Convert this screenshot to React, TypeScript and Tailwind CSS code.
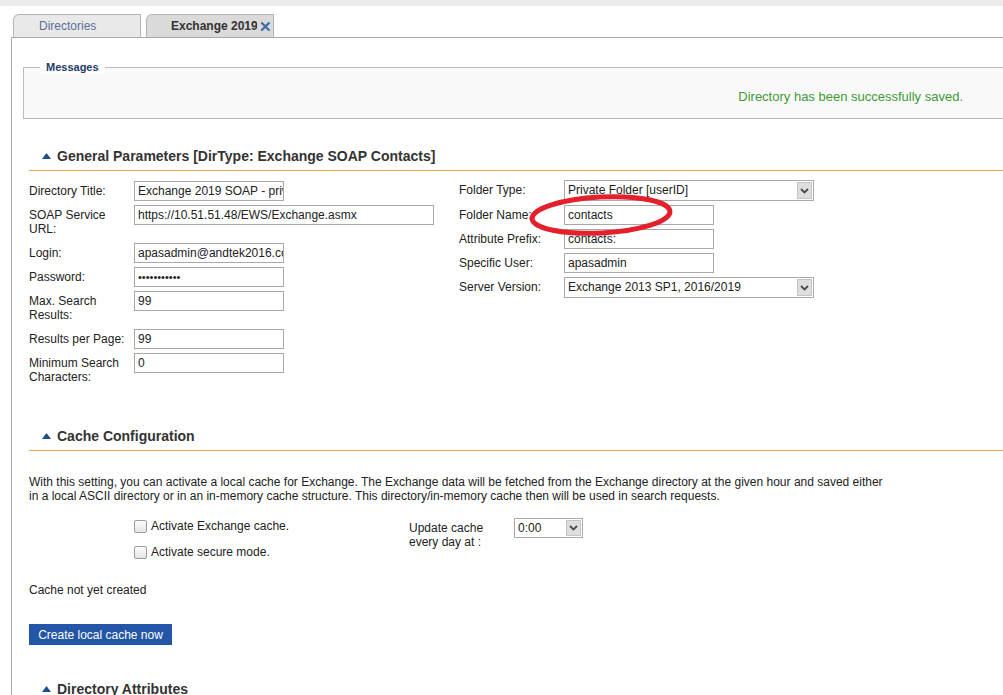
import React from "react";

const font = "font-['Liberation_Sans',Arial,sans-serif]";

const Triangle = () => (
  <svg width="9" height="6" viewBox="0 0 9 6" className="shrink-0">
    <polygon points="0,6 4.5,0 9,6" fill="#1d4f8c" />
  </svg>
);

const SectionHeading = ({ title, className = "" }: { title: string; className?: string }) => (
  <div className={`ml-[17px] flex items-center gap-[6px] border-b border-[#e6a64a] pb-[5px] pl-[13px] ${className}`}>
    <Triangle />
    <span className="text-[14px] font-bold leading-[18px] text-[#333]">{title}</span>
  </div>
);

const Label = ({ children }: { children: React.ReactNode }) => (
  <div className="py-[3px] pr-[4px] text-[12px] leading-[14px] text-[#222]">{children}</div>
);

const TextInput = ({ value, w = "w-[150px]" }: { value: string; w?: string }) => (
  <div className={`${w} h-[20px] overflow-hidden whitespace-nowrap border border-[#a9a9a9] bg-white px-[3px] text-[12px] leading-[18px] text-[#222]`}>
    {value}
  </div>
);

const Chevron = () => (
  <svg width="9" height="6" viewBox="0 0 9 6">
    <path d="M1 1 L4.5 4.5 L8 1" stroke="#4a4a4a" strokeWidth="1.8" fill="none" />
  </svg>
);

const Select = ({ value, w, h = "h-[21px]" }: { value: string; w: string; h?: string }) => (
  <div className={`${w} ${h} flex border border-[#a9a9a9] bg-white`}>
    <div className="flex-1 overflow-hidden whitespace-nowrap px-[3px] text-[12px] leading-[18px] text-[#222]">{value}</div>
    <div className="m-px flex w-[15px] items-center justify-center border border-[#c4c4c4] bg-[#dedede]">
      <Chevron />
    </div>
  </div>
);

const Checkbox = ({ label }: { label: string }) => (
  <div className="flex h-[20px] items-center gap-[4px]">
    <span className="h-[13px] w-[13px] rounded-[2px] border border-[#9c9c9c] bg-gradient-to-b from-[#fdfdfd] to-[#e4e4e4]" />
    <span className="text-[12px] leading-[14px] text-[#222]">{label}</span>
  </div>
);

export default function App() {
  return (
    <div className={`relative h-[695px] w-[1003px] overflow-hidden bg-white ${font}`}>
      <div className="h-[6px] bg-[#ececec]" />

      {/* tabs */}
      <div className="mt-[8px] flex gap-[5px] pl-[13px]">
        <div className="flex h-[23px] w-[128px] items-center rounded-tl-[6px] border border-b-0 border-[#b4b4b4] bg-[#e9e9e9] pl-[25px] text-[12px] text-[#5a6f94]">
          Directories
        </div>
        <div className="flex h-[23px] w-[128px] items-center rounded-tl-[6px] border border-b-0 border-[#b4b4b4] bg-[#dadada] pl-[24px]">
          <span className="w-[86px] overflow-hidden whitespace-nowrap text-[12px] font-bold text-[#333]">Exchange 2019</span>
          <span className="ml-[2px] text-[15px] font-bold leading-none text-[#3b6aa8]">✕</span>
        </div>
      </div>

      {/* panel */}
      <div className="ml-[11px] w-[1000px] border-l border-t border-[#a8a8a8] pb-[40px]">
        <fieldset className="ml-[11px] mt-[22px] border border-[#bcbcbc] bg-[#f9f9f9]">
          <legend className="ml-[16px] bg-white px-[6px] text-[11px] font-bold leading-[14px] text-[#1e3c68]">Messages</legend>
          <div className="flex h-[44px] justify-end pr-[47px] pt-[15px] text-[13px] leading-[15px] text-[#3f9a35]">
            Directory has been successfully saved.
          </div>
        </fieldset>

        <SectionHeading title="General Parameters [DirType: Exchange SOAP Contacts]" className="mt-[28px]" />

        <div className="ml-[17px] mt-[10px] flex items-start">
          <div className="grid w-[430px] grid-cols-[105px_auto] items-start gap-y-[4px]">
            <Label>Directory Title:</Label>
            <TextInput value="Exchange 2019 SOAP - private" />
            <Label>SOAP Service URL:</Label>
            <TextInput value="https://10.51.51.48/EWS/Exchange.asmx" w="w-[300px]" />
            <Label>Login:</Label>
            <TextInput value="apasadmin@andtek2016.com" />
            <Label>Password:</Label>
            <div className="h-[20px] w-[150px] overflow-hidden border border-[#a9a9a9] bg-white px-[3px] text-[11px] leading-[18px] text-[#222]">
              •••••••••••
            </div>
            <Label>Max. Search Results:</Label>
            <TextInput value="99" />
            <Label>Results per Page:</Label>
            <TextInput value="99" />
            <Label>Minimum Search Characters:</Label>
            <TextInput value="0" />
          </div>

          <div className="-mt-px grid grid-cols-[105px_auto] items-start gap-y-[4px]">
            <Label>Folder Type:</Label>
            <Select value="Private Folder [userID]" w="w-[250px]" />
            <Label>Folder Name:</Label>
            <TextInput value="contacts" />
            <Label>Attribute Prefix:</Label>
            <TextInput value="contacts:" />
            <Label>Specific User:</Label>
            <TextInput value="apasadmin" />
            <Label>Server Version:</Label>
            <Select value="Exchange 2013 SP1, 2016/2019" w="w-[250px]" />
          </div>
        </div>

        <SectionHeading title="Cache Configuration" className="mt-[40px]" />

        <p className="ml-[17px] mt-[24px] w-[860px] text-[12px] leading-[14px] text-[#222]">
          With this setting, you can activate a local cache for Exchange. The Exchange data will be fetched from the Exchange
          directory at the given hour and saved either in a local ASCII directory or in an in-memory cache structure. This
          directory/in-memory cache then will be used in search requests.
        </p>

        <div className="ml-[122px] mt-[13px] flex items-start">
          <div className="flex w-[275px] flex-col gap-[6px]">
            <Checkbox label="Activate Exchange cache." />
            <Checkbox label="Activate secure mode." />
          </div>
          <div className="w-[105px] pt-[5px] text-[12px] leading-[14px] text-[#222]">
            Update cache
            <br />
            every day at :
          </div>
          <div className="mt-[2px]">
            <Select value="0:00" w="w-[69px]" h="h-[20px]" />
          </div>
        </div>

        <div className="ml-[17px] mt-[21px] text-[12px] leading-[14px] text-[#222]">Cache not yet created</div>

        <button className="ml-[17px] mt-[27px] block h-[21px] w-[143px] bg-[#2356a6] text-[12px] text-white">
          Create local cache now
        </button>

        <SectionHeading title="Directory Attributes" className="mt-[35px]" />
      </div>

      {/* red annotation around Folder Name */}
      <svg className="pointer-events-none absolute left-[526px] top-[191px]" width="150" height="48" viewBox="0 0 150 48">
        <ellipse cx="75" cy="24" rx="69" ry="18" fill="none" stroke="#e3202b" strokeWidth="5" transform="rotate(-3 75 24)" />
      </svg>
    </div>
  );
}
